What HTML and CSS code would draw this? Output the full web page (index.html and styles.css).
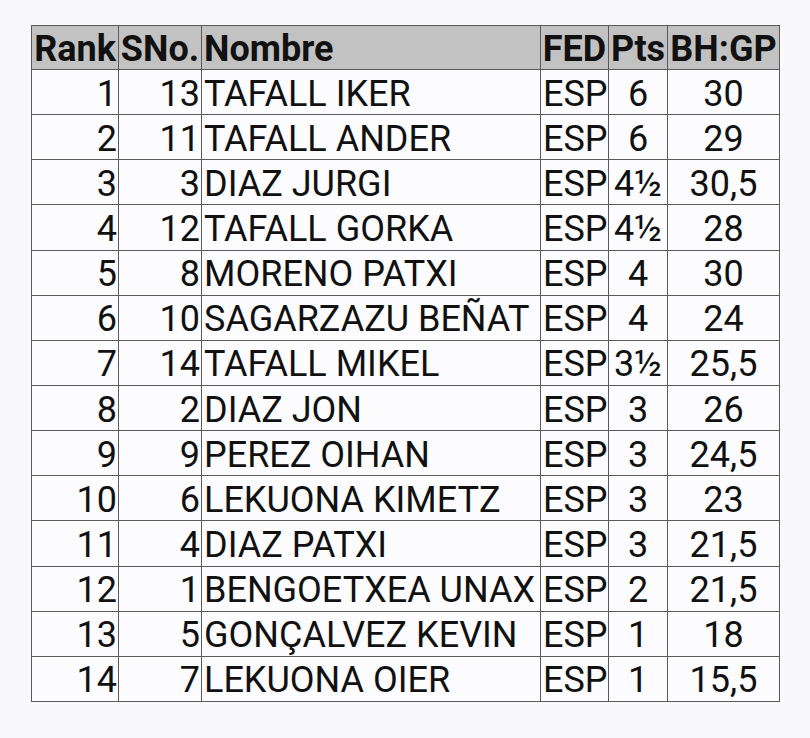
FILE: index.html
```html
<!DOCTYPE html>
<html>
<head>
<meta charset="utf-8">
<link rel="stylesheet" href="styles.css">
</head>
<body>
<div class="wrap">
<table class="standings">
<colgroup>
<col class="c-rank"><col class="c-sno"><col class="c-name"><col class="c-fed"><col class="c-pts"><col class="c-bh">
</colgroup>
<thead>
<tr><th>Rank</th><th>SNo.</th><th class="left">Nombre</th><th>FED</th><th>Pts</th><th>BH:GP</th></tr>
</thead>
<tbody>
<tr><td class="r">1</td><td class="r">13</td><td>TAFALL IKER</td><td>ESP</td><td class="c">6</td><td class="c">30</td></tr>
<tr><td class="r">2</td><td class="r">11</td><td>TAFALL ANDER</td><td>ESP</td><td class="c">6</td><td class="c">29</td></tr>
<tr><td class="r">3</td><td class="r">3</td><td>DIAZ JURGI</td><td>ESP</td><td class="c">4½</td><td class="c">30,5</td></tr>
<tr><td class="r">4</td><td class="r">12</td><td>TAFALL GORKA</td><td>ESP</td><td class="c">4½</td><td class="c">28</td></tr>
<tr><td class="r">5</td><td class="r">8</td><td>MORENO PATXI</td><td>ESP</td><td class="c">4</td><td class="c">30</td></tr>
<tr><td class="r">6</td><td class="r">10</td><td>SAGARZAZU BEÑAT</td><td>ESP</td><td class="c">4</td><td class="c">24</td></tr>
<tr><td class="r">7</td><td class="r">14</td><td>TAFALL MIKEL</td><td>ESP</td><td class="c">3½</td><td class="c">25,5</td></tr>
<tr><td class="r">8</td><td class="r">2</td><td>DIAZ JON</td><td>ESP</td><td class="c">3</td><td class="c">26</td></tr>
<tr><td class="r">9</td><td class="r">9</td><td>PEREZ OIHAN</td><td>ESP</td><td class="c">3</td><td class="c">24,5</td></tr>
<tr><td class="r">10</td><td class="r">6</td><td>LEKUONA KIMETZ</td><td>ESP</td><td class="c">3</td><td class="c">23</td></tr>
<tr><td class="r">11</td><td class="r">4</td><td>DIAZ PATXI</td><td>ESP</td><td class="c">3</td><td class="c">21,5</td></tr>
<tr><td class="r">12</td><td class="r">1</td><td>BENGOETXEA UNAX</td><td>ESP</td><td class="c">2</td><td class="c">21,5</td></tr>
<tr><td class="r">13</td><td class="r">5</td><td>GONÇALVEZ KEVIN</td><td>ESP</td><td class="c">1</td><td class="c">18</td></tr>
<tr><td class="r">14</td><td class="r">7</td><td>LEKUONA OIER</td><td>ESP</td><td class="c">1</td><td class="c">15,5</td></tr>
</tbody>
</table>
</div>
</body>
</html>
```
FILE: styles.css
```css
html, body {
  margin: 0;
  background: #f9f9fb;
}
.wrap {
  padding: 25px 0 0 31px;
}
.standings {
  border-collapse: collapse;
  table-layout: fixed;
  width: 748px;
  font-family: Roboto, "Liberation Sans", sans-serif;
  font-size: 36px;
  color: #111;
  background: #fcfcfe;
}
.c-rank { width: 87px; }
.c-sno { width: 83px; }
.c-name { width: 339px; }
.c-fed { width: 68px; }
.c-pts { width: 59px; }
.c-bh { width: 112px; }
.standings th, .standings td {
  border: 1px solid #5a5a5a;
  padding: 3px 2px 0;
  white-space: nowrap;
  overflow: visible;
  line-height: 1;
}
.standings th {
  background: #c2c2c2;
  font-weight: bold;
  height: 40px;
  padding: 3px 0 0;
  text-align: center;
}
.standings th.left { text-align: left; padding-left: 2px; }
.standings td {
  height: 41.15px;
  text-align: left;
}
.standings td.r { text-align: right; padding-right: 1px; }
.standings td.c { text-align: center; }
```
